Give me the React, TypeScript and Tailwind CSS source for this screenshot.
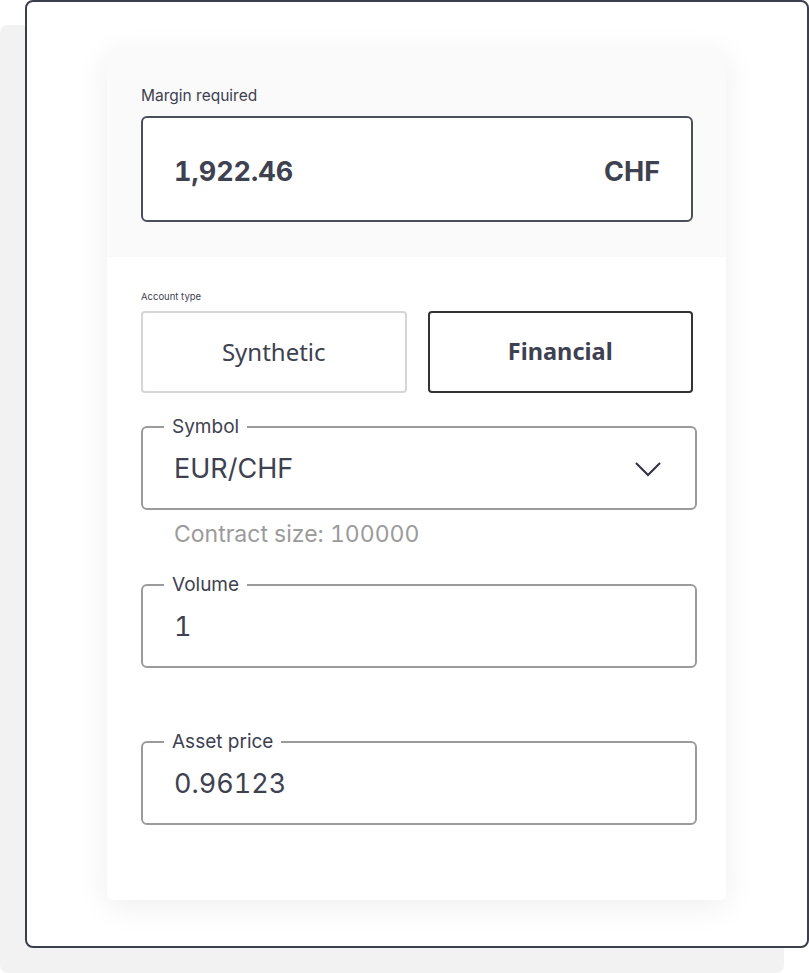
import React from "react";

function Field({ label, value, chevron }: { label: string; value: string; chevron?: boolean }) {
  return (
    <fieldset className="w-[556px] h-[95px] border-2 border-[#9b9b9b] rounded-[6px] px-[31px] pb-[8px] flex items-center">
      <legend className="ml-[-10px] px-[8px] text-[19px] leading-[24px] text-[#3e4150]">{label}</legend>
      <div className="flex w-full items-center justify-between">
        <span className="text-[27px] leading-[32px] text-[#3e4150] tabular-nums">{value}</span>
        {chevron && (
          <svg width="28" height="16" viewBox="0 0 28 16" className="mr-[2px]">
            <polyline points="2,2 14,14 26,2" fill="none" stroke="#2f3240" strokeWidth="2" />
          </svg>
        )}
      </div>
    </fieldset>
  );
}

export default function App() {
  return (
    <div className="w-[809px] h-[973px] bg-white" style={{ fontFamily: "Inter, 'Noto Sans', sans-serif" }}>
      <div className="ml-[25px] w-[784px] h-[948px] border-2 border-[#3b3e4b] rounded-[8px] bg-white shadow-[-25px_25px_0_0_#f2f2f3] flex items-center">
        <div className="ml-[80px] w-[619px] h-[851px] bg-white rounded-[6px] shadow-[0_6px_32px_rgba(0,0,0,0.07)] overflow-hidden">
          <div className="bg-[#fafafa] pt-[37px] pl-[34px] pr-[33px] pb-[35px]">
            <div className="text-[15.5px] leading-[20px] text-[#3e4150]">Margin required</div>
            <div className="mt-[10px] h-[106px] border-2 border-[#4b4f5c] rounded-[6px] bg-white flex items-center justify-between pl-[31px] pr-[31px] pt-[7px]">
              <span className="text-[27px] font-bold text-[#3e4150] tabular-nums">1,922.46</span>
              <span className="text-[27px] font-bold text-[#3e4150]">CHF</span>
            </div>
          </div>
          <div className="pt-[33px] pl-[34px]">
            <div className="text-[9.5px] leading-[14px] text-[#3e4150]">Account type</div>
            <div className="mt-[7px] flex gap-[21px] w-[552px]" style={{ fontFamily: "'Noto Sans', sans-serif" }}>
              <div className="flex-1 h-[82px] border-2 border-[#d6d6d6] rounded-[4px] flex items-center justify-center text-[24px] text-[#3e4150]">Synthetic</div>
              <div className="flex-1 h-[82px] border-2 border-[#333333] rounded-[4px] flex items-center justify-center text-[23.5px] font-bold text-[#3e4150]">Financial</div>
            </div>
            <div className="mt-[22px]">
              <Field label="Symbol" value="EUR/CHF" chevron />
            </div>
            <div className="mt-[10px] pl-[33px] text-[23px] leading-[28px] text-[#9b9b9b] tabular-nums">Contract size: 100000</div>
            <div className="mt-[25px]">
              <Field label="Volume" value="1" />
            </div>
            <div className="mt-[62px]">
              <Field label="Asset price" value="0.96123" />
            </div>
          </div>
        </div>
      </div>
    </div>
  );
}
